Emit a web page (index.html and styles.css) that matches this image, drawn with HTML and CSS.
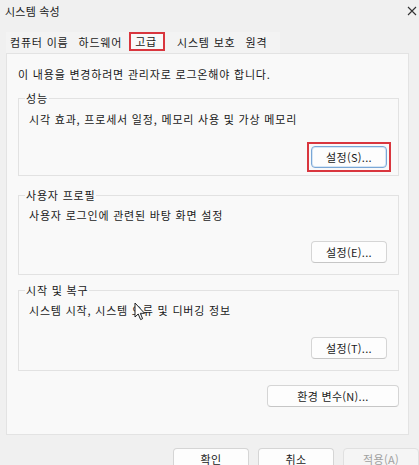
FILE: index.html
```html
<!DOCTYPE html>
<html lang="ko">
<head>
  <meta charset="utf-8">
  <title>시스템 속성</title>
  <link rel="stylesheet" href="styles.css">
</head>
<body>
  <div class="dialog">
    <div class="titlebar">
      <span class="title">시스템 속성</span>
      <svg class="close" width="10" height="10" viewBox="0 0 10 10">
        <path d="M1 1 L9 9 M9 1 L1 9" stroke="#333" stroke-width="1.1" fill="none"/>
      </svg>
    </div>

    <div class="tabs">
      <span class="tab">컴퓨터 이름</span>
      <span class="tab">하드웨어</span>
      <span class="tab active">고급</span>
      <span class="tab">시스템 보호</span>
      <span class="tab">원격</span>
    </div>

    <div class="panel">
      <p class="note">이 내용을 변경하려면 관리자로 로그온해야 합니다.</p>

      <fieldset class="group first">
        <legend>성능</legend>
        <p class="desc">시각 효과, 프로세서 일정, 메모리 사용 및 가상 메모리</p>
        <div class="btn-row">
          <span class="mark"><button class="btn default">설정(S)...</button></span>
        </div>
      </fieldset>

      <fieldset class="group second">
        <legend>사용자 프로필</legend>
        <p class="desc">사용자 로그인에 관련된 바탕 화면 설정</p>
        <div class="btn-row">
          <button class="btn">설정(E)...</button>
        </div>
      </fieldset>

      <fieldset class="group third">
        <legend>시작 및 복구</legend>
        <p class="desc">시스템 시작, 시스템 오류 및 디버깅 정보</p>
        <div class="btn-row">
          <button class="btn">설정(T)...</button>
        </div>
        <svg class="cursor" width="12" height="20" viewBox="0 0 12 20">
          <path d="M1 1 L1 15 L4.2 12 L6.6 17.6 L8.6 16.7 L6.3 11.3 L10.6 11.3 Z" fill="#fff" stroke="#222" stroke-width="1"/>
        </svg>
      </fieldset>

      <div class="env-row">
        <button class="btn wide">환경 변수(N)...</button>
      </div>
    </div>

    <div class="footer">
      <button class="btn">확인</button>
      <button class="btn">취소</button>
      <button class="btn disabled">적용(A)</button>
    </div>
  </div>
</body>
</html>
```

FILE: styles.css
```css
* {
  box-sizing: border-box;
}

body {
  margin: 0;
  background-color: #f0f0f0;
  font-family: "Noto Sans CJK KR", "Noto Sans", sans-serif;
  font-size: 11px;
  letter-spacing: 0.8px;
  color: #1a1a1a;
  overflow: hidden;
}

p {
  margin: 0;
}

.dialog {
  width: 419px;
  height: 465px;
}

.titlebar {
  height: 21px;
  display: flex;
  justify-content: space-between;
  align-items: center;
  padding: 0 2px 0 5px;
}

.title {
  letter-spacing: 0.2px;
}

.tabs {
  display: flex;
  margin: 11px 0 0 6px;
  width: 274px;
  height: 21px;
  background-color: #f3f3f3;
}

.tab {
  padding: 0 5px;
  line-height: 21px;
}

.tab:first-child {
  padding-left: 4px;
}

.tab.active {
  outline: 2px solid #d9363e;
  outline-offset: -2px;
  padding: 0 8px 0 6px;
  margin: 0 7px 0 2px;
  line-height: 19px;
  height: 19px;
  background-color: #f9f9f9;
}

.panel {
  margin: 0 10px 0 6px;
  height: 382px;
  background-color: #f9f9f9;
  border: 1px solid #e3e3e3;
  padding: 12px 9px 0 11px;
}

.note {
  line-height: 16px;
}

.group {
  position: relative;
  margin: 9px 0 0 0;
  padding: 0 11px 0 10px;
  border: 1px solid #e2e2e2;
  display: flex;
  flex-direction: column;
}

.group.first {
  height: 85px;
}

.group.second {
  margin-top: 12px;
  height: 87px;
}

.group.third {
  margin-top: 8px;
  height: 88px;
}

.group legend {
  padding: 0 1px;
  margin-left: -4px;
  line-height: 14px;
}

.desc {
  margin-top: 6px;
  line-height: 16px;
}

.second .desc,
.third .desc {
  margin-top: 5px;
}

.btn-row {
  margin-top: auto;
  margin-bottom: 11px;
  display: flex;
  justify-content: flex-end;
}

.first .btn-row {
  margin-bottom: 7px;
}

.mark {
  display: inline-block;
  border: 2px solid #d9363e;
  padding: 2px;
  margin: -4px -4px -4px 0;
}

.btn {
  font-family: inherit;
  font-size: 11px;
  letter-spacing: 0.3px;
  color: #1a1a1a;
  width: 76px;
  height: 22px;
  padding: 0;
  background-color: #fdfdfd;
  border: 1px solid #d5d5d5;
  border-bottom-color: #c6c6c6;
  border-radius: 4px;
}

.btn.default {
  border: 1px solid #7aa7d6;
  box-shadow: inset 0 0 0 1px #d6e6f5;
}

.btn.wide {
  width: 132px;
}

.btn.disabled {
  color: #a0a0a0;
  background-color: #f5f5f5;
  border-color: #e0e0e0;
}

.env-row {
  display: flex;
  justify-content: flex-end;
  margin-top: 14px;
}

.cursor {
  position: absolute;
  left: 115px;
  top: 5px;
}

.footer {
  display: flex;
  gap: 9px;
  margin: 13px 0 0 173px;
}
```
